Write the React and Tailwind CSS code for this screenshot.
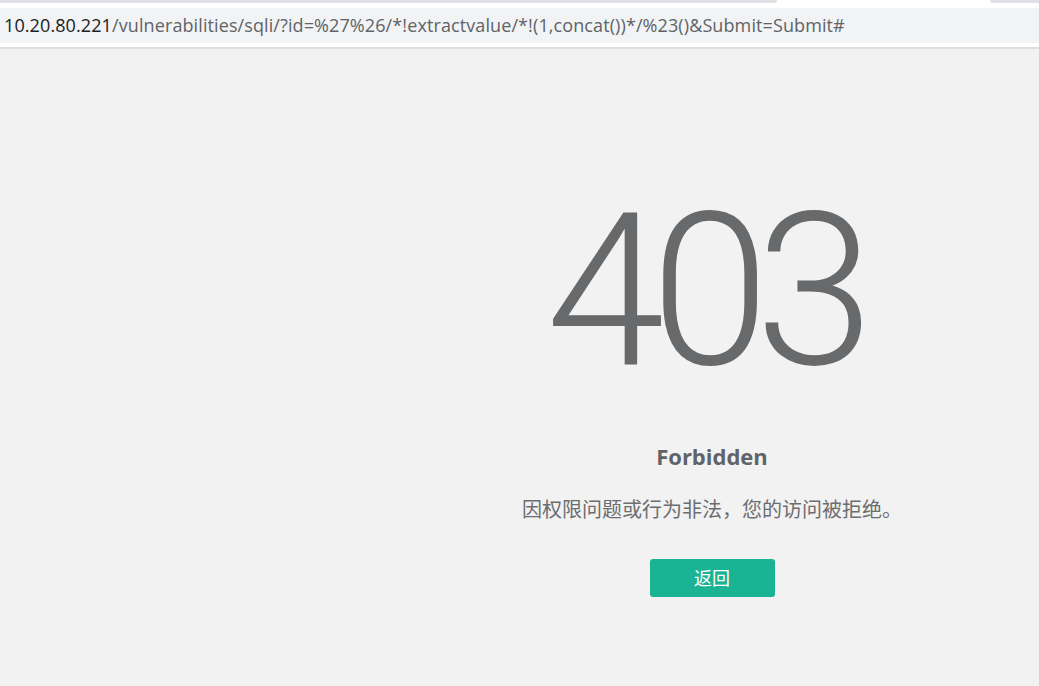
export default function App() {
  return (
    <div className="w-[1039px] h-[686px] flex flex-col overflow-hidden bg-[#f2f2f2] font-['Open_Sans','Noto_Sans_CJK_SC',sans-serif]">
      {/* Browser chrome */}
      <div className="bg-white shrink-0">
        <div className="flex h-[3px]">
          <div className="w-[777px] bg-[#dee1e6] rounded-br-[3px]" />
          <div className="w-[213px]" />
          <div className="flex-1 bg-[#dee1e6] rounded-bl-[3px]" />
        </div>
        <div className="h-[5px]" />
        <div className="h-[35px] bg-[#f1f3f4] flex items-center pl-[4px] text-[18px] tracking-[0.1px] whitespace-nowrap">
          <span className="text-[#202124]">10.20.80.221</span>
          <span className="text-[#5f6368]">/vulnerabilities/sqli/?id=%27%26/*!extractvalue/*!(1,concat())*/%23()&amp;Submit=Submit#</span>
        </div>
        <div className="h-[4px]" />
        <div className="h-[2px] bg-[#dcdee1]" />
      </div>

      {/* Error page */}
      <main className="flex-1 flex">
        <div className="ml-[412px] w-[600px] flex flex-col items-center">
          <div className="mt-[135px] mr-[18px] text-[214px] leading-[214px] font-light text-[#67696b] font-['Roboto',sans-serif] tracking-[-14px]">
            403
          </div>
          <h1 className="mt-[44px] text-[22px] leading-[28px] font-bold text-[#606367]">Forbidden</h1>
          <p className="mt-[26px] text-[20px] leading-[28px] text-[#6b6d70]">因权限问题或行为非法，您的访问被拒绝。</p>
          <button className="mt-[35px] w-[125px] h-[38px] rounded-[3px] bg-[#1ab394] text-white text-[18px]">返回</button>
        </div>
      </main>
    </div>
  );
}
